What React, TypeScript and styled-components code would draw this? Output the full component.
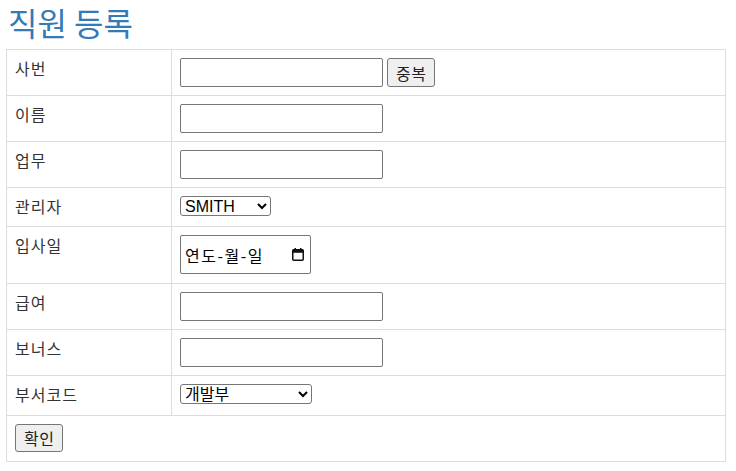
import styled, { createGlobalStyle } from 'styled-components'

const GlobalStyle = createGlobalStyle`
  body {
    margin: 0;
    background: #fff;
    font-family: 'Noto Sans CJK KR', 'Noto Sans', sans-serif;
    color: #333;
  }
`

const Wrapper = styled.div`
  padding: 0 10px 0 6px;
`

const Title = styled.h1`
  margin: 0;
  padding-left: 2px;
  font-size: 32px;
  font-weight: 400;
  line-height: 44px;
  color: #337ab7;
`

const Table = styled.table`
  margin-top: 5px;
  width: 720px;
  border-collapse: collapse;
  table-layout: fixed;
`

const Cell = styled.td<{ $label?: boolean }>`
  border: 1px solid #ddd;
  padding: 8px;
  line-height: 20px;
  font-size: 16px;
  letter-spacing: 1px;
  vertical-align: top;
  width: ${props => (props.$label ? '148px' : 'auto')};
`

const TextInput = styled.input`
  box-sizing: border-box;
  width: 203px;
  height: 29px;
  margin: 0;
  border: 1px solid #767676;
  border-radius: 2px;
  vertical-align: top;
  font-size: 16px;
`

const Button = styled.button<{ $gap?: boolean }>`
  box-sizing: border-box;
  height: ${props => (props.$gap ? '29px' : '28px')};
  margin: 0 0 ${props => (props.$gap ? '0' : '1px')} ${props => (props.$gap ? '4px' : '0')};
  padding: 0 8px;
  background: #efefef;
  border: 1px solid #767676;
  border-radius: 3px;
  font-family: 'Noto Sans CJK KR', sans-serif;
  font-size: 16px;
  letter-spacing: 0.5px;
  color: #222;
  vertical-align: top;
`

const Select = styled.select<{ $width: number; $bottom: number }>`
  box-sizing: border-box;
  width: ${props => props.$width}px;
  height: 20px;
  margin: 0 0 ${props => props.$bottom}px;
  padding: 0;
  border: 1px solid #767676;
  border-radius: 3px;
  background: #fff;
  font-family: 'Liberation Sans', 'Noto Sans CJK KR', sans-serif;
  font-size: 16px;
  letter-spacing: 0;
  color: #000;
  vertical-align: top;
`

const DateBox = styled.div`
  box-sizing: border-box;
  width: 131px;
  height: 39px;
  margin-bottom: 1px;
  padding: 0 6px 0 4px;
  display: flex;
  align-items: center;
  justify-content: space-between;
  border: 1px solid #767676;
  border-radius: 2px;
  font-size: 16px;
  color: #000;
  letter-spacing: 1.5px;
`

const CalendarIcon = () => (
  <svg width="12" height="13" viewBox="0 0 12 13">
    <rect x="0.75" y="1.75" width="10.5" height="10.5" rx="1" fill="none" stroke="#111" strokeWidth="1.5" />
    <rect x="0.75" y="1.75" width="10.5" height="3" fill="#111" />
    <rect x="2.5" y="0" width="1.5" height="2.5" fill="#111" />
    <rect x="8" y="0" width="1.5" height="2.5" fill="#111" />
  </svg>
)

export default function App() {
  return (
    <Wrapper>
      <GlobalStyle />
      <Title>직원 등록</Title>
      <Table>
        <tbody>
          <tr>
            <Cell $label>사번</Cell>
            <Cell>
              <TextInput type="text" />
              <Button $gap>중복</Button>
            </Cell>
          </tr>
          <tr>
            <Cell $label>이름</Cell>
            <Cell>
              <TextInput type="text" />
            </Cell>
          </tr>
          <tr>
            <Cell $label>업무</Cell>
            <Cell>
              <TextInput type="text" />
            </Cell>
          </tr>
          <tr>
            <Cell $label>관리자</Cell>
            <Cell>
              <Select $width={91} $bottom={2} defaultValue="7369">
                <option value="7369">SMITH</option>
                <option value="7499">ALLEN</option>
                <option value="7521">WARD</option>
                <option value="7839">KING</option>
              </Select>
            </Cell>
          </tr>
          <tr>
            <Cell $label>입사일</Cell>
            <Cell>
              <DateBox>
                <span>연도-월-일</span>
                <CalendarIcon />
              </DateBox>
            </Cell>
          </tr>
          <tr>
            <Cell $label>급여</Cell>
            <Cell>
              <TextInput type="text" />
            </Cell>
          </tr>
          <tr>
            <Cell $label>보너스</Cell>
            <Cell>
              <TextInput type="text" />
            </Cell>
          </tr>
          <tr>
            <Cell $label>부서코드</Cell>
            <Cell>
              <Select $width={132} $bottom={3} defaultValue="10">
                <option value="10">개발부</option>
                <option value="20">영업부</option>
                <option value="30">총무부</option>
              </Select>
            </Cell>
          </tr>
          <tr>
            <Cell colSpan={2}>
              <Button>확인</Button>
            </Cell>
          </tr>
        </tbody>
      </Table>
    </Wrapper>
  )
}
